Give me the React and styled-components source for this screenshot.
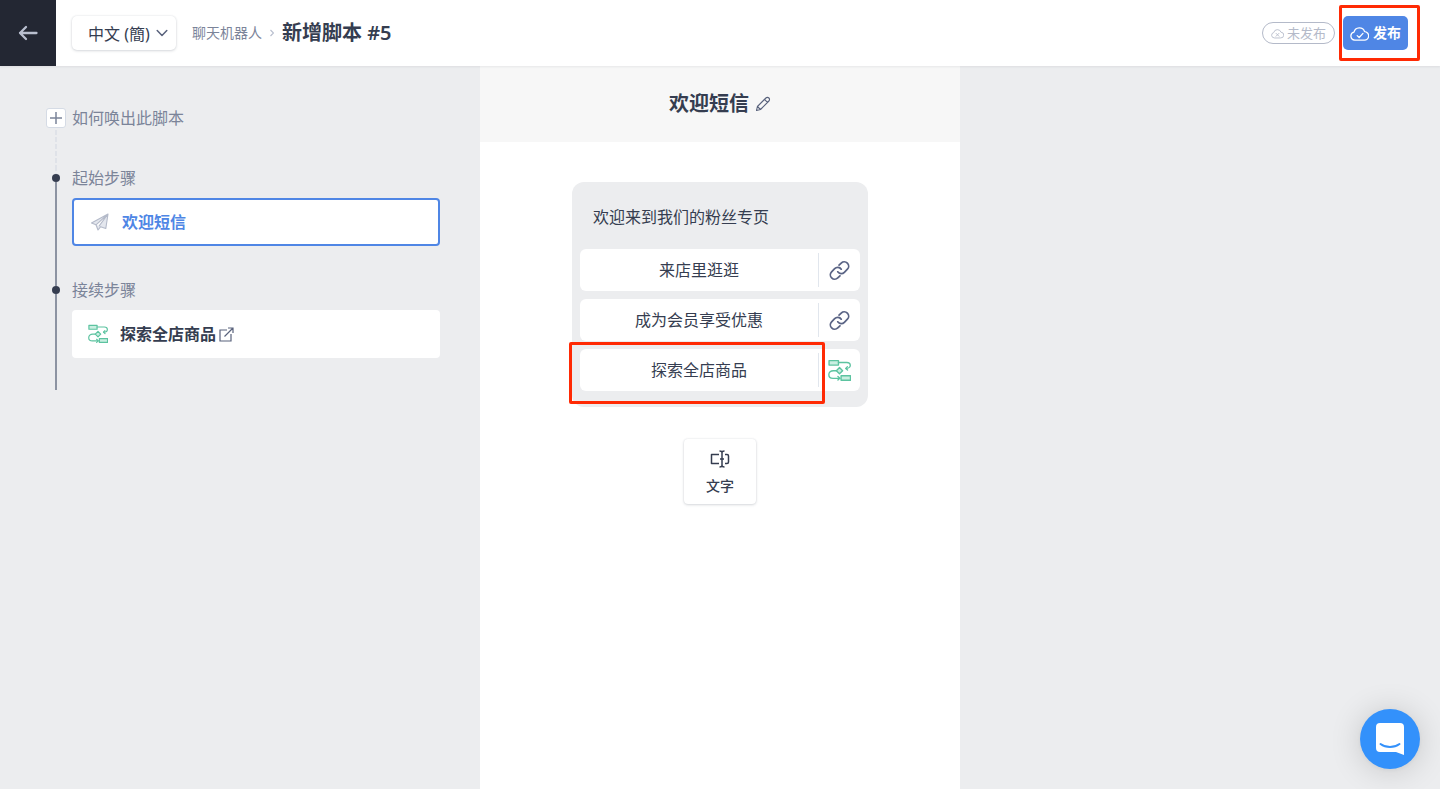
import React from "react";
import styled, { createGlobalStyle, css } from "styled-components";

const choices = [
  { text: "来店里逛逛", type: "link" },
  { text: "成为会员享受优惠", type: "link" },
  { text: "探索全店商品", type: "flow", marked: true },
];

const FlowIcon = ({ size }) => (
  <svg width={size} height={size} viewBox="0 0 22 22" fill="none" stroke="#5cc3a0" strokeWidth="1.3" strokeLinejoin="round" strokeLinecap="round" aria-hidden="true">
    <rect x="1" y="1.500" width="9" height="4.300" fill="#c9efe1" />
    <rect x="12.500" y="16" width="9" height="4.300" fill="#c9efe1" />
    <path d="M10 3.300h8c2 0 3.300 1.200 3.300 2.800S19.500 9 17.300 9" />
    <path d="m18.600 7.300-1.600 1.700 1.700 1.500" />
    <path d="M8 11.200H5.200C2.500 11.200 .8 12.800 .8 15s1.700 3.500 4 3.500h6.500" />
    <path d="m9.500 16.800 1.800 1.700-1.800 1.700" />
    <path d="m11 8.200 3 3-3 3-3-3z" fill="#c9efe1" />
  </svg>
);

const LinkIcon = () => (
  <svg width="21" height="21" viewBox="0 0 24 24" fill="none" stroke="#5a6485" strokeWidth="2" strokeLinecap="round" aria-hidden="true">
    <path d="M10 13.500a5 5 0 0 0 7.540.540l3.500-3.500a5 5 0 0 0-7.070-7.070l-2.500 2.500" />
    <path d="M14 10.500a5 5 0 0 0-7.540-.540l-3.500 3.500a5 5 0 0 0 7.070 7.070l2.500-2.500" />
  </svg>
);

const CloudIcon = ({ width, height, published }) => (
  <svg width={width} height={height} viewBox="0 0 18 14" fill="none" stroke="currentColor" strokeWidth="1.200" strokeLinecap="round" strokeLinejoin="round" aria-hidden="true">
    <path d="M4.500 13.200A3.800 3.800 0 0 1 3.800 5.700 5.200 5.200 0 0 1 13.800 5.200 4 4 0 0 1 13.500 13.200Z" />
    {published ? <path d="m6.800 9 1.900 1.800 3.600-3.900" /> : <path d="m7 6.800 4 4m0-4-4 4" />}
  </svg>
);

const App = () => (
  <>
    <GlobalStyle />
    <Page>
      <TopBar>
        <BackButton aria-label="返回">
          <svg width="20" height="16" viewBox="0 0 20 16" fill="none" stroke="#b9bfcf" strokeWidth="2.300" strokeLinecap="round" strokeLinejoin="round">
            <path d="M18.500 8H2M8 2 2 8l6 6" />
          </svg>
        </BackButton>
        <Language>
          <select aria-label="语言" defaultValue="zh">
            <option value="zh">中文 (簡)</option>
          </select>
          <svg width="12" height="8" viewBox="0 0 12 8" fill="none" stroke="#59627c" strokeWidth="1.500" strokeLinecap="round" strokeLinejoin="round">
            <path d="m1.200 1.500 4.800 5 4.800-5" />
          </svg>
        </Language>
        <Breadcrumb>
          <a href="#bots">聊天机器人</a>
          <svg width="4" height="8" viewBox="0 0 4 8" fill="none" stroke="#b9bfcf" strokeWidth="1.200">
            <path d="m.5 1 3 3-3 3" />
          </svg>
          <h1>新增脚本 #5</h1>
        </Breadcrumb>
        <Actions>
          <Status>
            <CloudIcon width={13} height={11} />
            未发布
          </Status>
          <PublishButton>
            <CloudIcon width={19} height={15} published />
            发布
          </PublishButton>
        </Actions>
      </TopBar>

      <Columns>
        <Steps>
          <Step>
            <Rail>
              <AddButton aria-label="新增">
                <svg width="12" height="12" viewBox="0 0 12 12" stroke="#7b8499" strokeWidth="1.500">
                  <path d="M6 0v12M0 6h12" />
                </svg>
              </AddButton>
              <Track $dashed />
            </Rail>
            <StepBody $gap={36}>
              <StepLabel>如何唤出此脚本</StepLabel>
            </StepBody>
          </Step>
          <Step>
            <Rail>
              <Lead $dashed />
              <Dot />
              <Track />
            </Rail>
            <StepBody $gap={32}>
              <StepLabel>起始步骤</StepLabel>
              <StepCard $active>
                <svg width="20" height="18" viewBox="0 0 20 18" fill="#e4e7ee" stroke="#b4bac9" strokeWidth="1.100" strokeLinejoin="round">
                  <path d="M18 1 1.500 10l4.500 1.800L18 1 9 13.200l6.800 2.300z" />
                  <path d="M6 11.800 8 17l2.500-3.200" />
                </svg>
                欢迎短信
              </StepCard>
            </StepBody>
          </Step>
          <Step>
            <Rail>
              <Lead />
              <Dot />
              <Track />
            </Rail>
            <StepBody $gap={32}>
              <StepLabel>接续步骤</StepLabel>
              <StepCard>
                <FlowIcon size={20} />
                <StepLink>
                  探索全店商品
                  <svg width="15" height="15" viewBox="0 0 15 15" fill="none" stroke="#59627c" strokeWidth="1.200">
                    <path d="M8 3H1v11h11V7M9 1h5v5M14 1 5.500 9.500" />
                  </svg>
                </StepLink>
              </StepCard>
            </StepBody>
          </Step>
        </Steps>

        <Editor>
          <EditorHeader>
            <h2>欢迎短信</h2>
            <EditButton aria-label="编辑名称">
              <svg width="16" height="16" viewBox="0 0 16 16" fill="none" stroke="#59627c" strokeWidth="1.100" strokeLinejoin="round">
                <path d="M1.500 14.500 2.400 10.500 10.900 2a2 2 0 0 1 3 3L5.500 13.500zM9.500 3.400l3 3M2.400 10.500l3.100 3" />
              </svg>
            </EditButton>
          </EditorHeader>
          <Canvas>
            <Message>
              <p>欢迎来到我们的粉丝专页</p>
              {choices.map(choice => (
                <Choice key={choice.text}>
                  <ChoiceText $marked={choice.marked}>{choice.text}</ChoiceText>
                  <ChoiceAction aria-label={choice.type}>
                    {choice.type === "link" ? <LinkIcon /> : <FlowIcon size={23} />}
                  </ChoiceAction>
                </Choice>
              ))}
            </Message>
            <AddText>
              <svg width="20" height="18" viewBox="0 0 20 18" fill="none" stroke="#353d50" strokeWidth="1.500" strokeLinejoin="round">
                <path d="M9 4.500H1.500v9H9M15 4.500h2a1.500 1.500 0 0 1 1.500 1.500v6a1.500 1.500 0 0 1-1.500 1.500h-2" />
                <path d="M9.500 1c1.500 0 2.500.5 2.500 1.500 0-1 1-1.500 2.500-1.500M12 2.500v13M9.500 17c1.500 0 2.500-.5 2.500-1.500 0 1 1 1.500 2.500 1.500M10 9h4" />
              </svg>
              文字
            </AddText>
          </Canvas>
        </Editor>
      </Columns>

      <ChatButton aria-label="客服">
        <svg width="30" height="34" viewBox="0 0 30 34">
          <path d="M5 1h20a4 4 0 0 1 4 4v28l-8-3H5a4 4 0 0 1-4-4V5a4 4 0 0 1 4-4z" fill="#fff" />
          <path d="M5.500 22c5.500 4 13.500 4 19 0" fill="none" stroke="#3391fb" strokeWidth="2" strokeLinecap="round" />
        </svg>
      </ChatButton>
    </Page>
  </>
);

export default App;

const GlobalStyle = createGlobalStyle`
  * {
    box-sizing: border-box;
  }

  body {
    margin: 0;
    color: #353d50;
    background: #ecedef;
  }

  body, button, select {
    font-family: "Noto Sans", "Noto Sans CJK SC", sans-serif;
  }

  h1, h2, p {
    margin: 0;
  }

  button {
    padding: 0;
    border: none;
    background: none;
    color: inherit;
    cursor: pointer;
  }
`;

const highlight = css`
  position: relative;

  &::after {
    content: "";
    position: absolute;
    border: 3px solid #ff2a04;
    border-radius: 2px;
    pointer-events: none;
  }
`;

const Page = styled.div`
  display: flex;
  flex-direction: column;
  min-height: 100vh;
`;

const TopBar = styled.header`
  display: flex;
  align-items: center;
  height: 66px;
  padding-right: 32px;
  background: #fff;
  box-shadow: 0 1px 2px rgba(40, 50, 70, 0.08);
  position: relative;
  z-index: 1;
`;

const BackButton = styled.button`
  display: flex;
  align-items: center;
  justify-content: center;
  width: 56px;
  height: 100%;
  background: #232733;
`;

const Language = styled.div`
  position: relative;
  margin: 0 16px;

  select {
    appearance: none;
    display: block;
    height: 34px;
    width: 104px;
    padding: 2px 16px 0;
    border: none;
    border-radius: 5px;
    background: #fff;
    box-shadow: 0 0 2px rgba(40, 50, 70, 0.12), 0 1px 3px rgba(40, 50, 70, 0.16);
    color: #353d50;
    font-size: 16px;
  }

  svg {
    position: absolute;
    right: 8px;
    top: 13px;
    pointer-events: none;
  }
`;

const Breadcrumb = styled.nav`
  display: flex;
  align-items: center;
  gap: 8px;

  a {
    color: #7b8499;
    font-size: 14px;
    line-height: 20px;
    text-decoration: none;
  }

  h1 {
    font-size: 20px;
    font-weight: 600;
    line-height: 30px;
  }
`;

const Actions = styled.div`
  display: flex;
  align-items: center;
  gap: 8px;
  margin-left: auto;
`;

const Status = styled.span`
  display: flex;
  align-items: center;
  gap: 3px;
  height: 22px;
  padding: 0 8px;
  border: 1px solid #b4bac9;
  border-radius: 11px;
  color: #b4bac9;
  font-size: 13px;
  line-height: 20px;
`;

const PublishButton = styled.button`
  ${highlight}
  display: flex;
  align-items: center;
  gap: 4px;
  height: 34px;
  padding: 0 7px;
  border-radius: 5px;
  background: #4f86e5;
  color: #fff;
  font-size: 14px;
  font-weight: 700;
  line-height: 20px;

  &::after {
    inset: -11px -12px -11px -4px;
  }
`;

const Columns = styled.div`
  flex: 1;
  display: grid;
  grid-template-columns: repeat(3, 1fr);
`;

const Steps = styled.aside`
  padding: 40px;
`;

const Step = styled.section`
  display: flex;
`;

const Rail = styled.div`
  display: flex;
  flex-direction: column;
  align-items: center;
  width: 32px;
`;

const line = css`
  width: 2px;
  background: ${({ $dashed }) =>
    $dashed ? "repeating-linear-gradient(#dfe2e8 0 5px, transparent 5px 7px)" : "#8c93a2"};
`;

const Track = styled.span`
  ${line}
  flex: 1;
`;

const Lead = styled.span`
  ${line}
  height: 8px;
`;

const Dot = styled.span`
  width: 8px;
  height: 8px;
  border-radius: 50%;
  background: #353d50;
`;

const AddButton = styled.button`
  display: flex;
  align-items: center;
  justify-content: center;
  width: 20px;
  height: 20px;
  margin: 2px 0;

  && {
    border: 1px solid #d5dbe5;
    border-radius: 3px;
    background: #fff;
  }
`;

const StepBody = styled.div`
  flex: 1;
  padding-bottom: ${({ $gap }) => $gap}px;
`;

const StepLabel = styled.p`
  color: #7b8499;
  font-size: 16px;
  line-height: 24px;
`;

const StepCard = styled.div`
  display: flex;
  align-items: center;
  gap: 12px;
  height: 48px;
  margin-top: 8px;
  padding: 0 16px;
  border-radius: 4px;
  background: #fff;
  font-size: 16px;
  font-weight: 600;
  line-height: 24px;

  ${({ $active }) =>
    $active &&
    css`
      border: 2px solid #4f86e5;
      color: #4f86e5;
    `}
`;

const StepLink = styled.span`
  display: flex;
  align-items: center;
  gap: 3px;
`;

const Editor = styled.main`
  background: #fff;
`;

const EditorHeader = styled.div`
  display: flex;
  align-items: center;
  justify-content: center;
  gap: 6px;
  height: 76px;
  background: #f7f7f7;

  h2 {
    font-size: 20px;
    font-weight: 600;
    line-height: 30px;
  }
`;

const EditButton = styled.button`
  display: flex;
`;

const Canvas = styled.div`
  display: flex;
  flex-direction: column;
  align-items: center;
  gap: 32px;
  padding: 40px 16px;
`;

const Message = styled.div`
  display: flex;
  flex-direction: column;
  gap: 8px;
  width: 296px;
  padding: 8px 8px 16px;
  border-radius: 12px;
  background: #ecedef;

  p {
    padding: 15px 13px 12px;
    font-size: 16px;
    line-height: 24px;
  }
`;

const Choice = styled.div`
  display: flex;
  align-items: center;
  height: 42px;
  border-radius: 6px;
  background: #fff;
`;

const ChoiceText = styled.button`
  flex: 1;
  height: 100%;
  font-size: 16px;
  line-height: 24px;

  ${({ $marked }) =>
    $marked &&
    css`
      ${highlight}

      &::after {
        inset: -7px -7px -13px -11px;
      }
    `}
`;

const ChoiceAction = styled.button`
  display: flex;
  align-items: center;
  justify-content: center;
  width: 42px;
  height: 34px;

  && {
    border-left: 1px solid #e1e6ed;
  }
`;

const AddText = styled.button`
  display: flex;
  flex-direction: column;
  align-items: center;
  justify-content: center;
  gap: 8px;
  width: 72px;
  height: 65px;
  border-radius: 4px;
  box-shadow: 0 0 2px rgba(40, 50, 70, 0.12), 0 1px 3px rgba(40, 50, 70, 0.16);
  font-size: 14px;
  font-weight: 500;
  line-height: 20px;

  && {
    padding-top: 2px;
  }
`;

const ChatButton = styled.button`
  position: fixed;
  right: 20px;
  bottom: 20px;
  display: flex;
  align-items: center;
  justify-content: center;
  width: 60px;
  height: 60px;
  border-radius: 50%;
  background: #3391fb;
  box-shadow: 0 1px 6px rgba(0, 0, 0, 0.06), 0 2px 32px rgba(0, 0, 0, 0.16);
`;
